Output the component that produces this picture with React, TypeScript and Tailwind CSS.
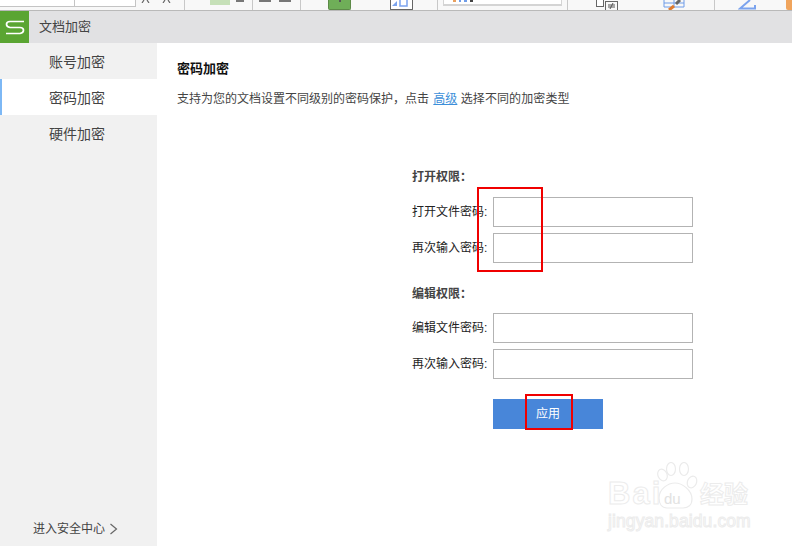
const F = "font-['Liberation_Sans','Noto_Sans_CJK_SC',sans-serif]";

function Glyph({ w }: { w: string }) {
  return <div className={`${w} h-[2px] shrink-0 bg-[#777]`} />;
}

function Legs() {
  return (
    <svg className="shrink-0" width="9" height="3" viewBox="0 0 9 3" fill="none" stroke="#666" strokeWidth="1.2">
      <path d="M3 0L1 3M6 0L8 3" />
    </svg>
  );
}

function Toolbar() {
  const section = "flex h-full shrink-0 items-start border-r border-[#c8c8c8]";
  return (
    <div className="flex h-[11px] shrink-0 overflow-hidden border-b border-[#b9b9b9] bg-[#f8f8f8]">
      <div className={`${section} w-[185px]`}>
        <div className="h-[7px] w-[75px] shrink-0 border-r border-b border-[#c4c4c4] bg-white" />
        <div className="h-[7px] w-[61px] shrink-0 border-r border-b border-[#c4c4c4] bg-white" />
        <div className="ml-[5px] flex gap-[12px]">
          <Legs />
          <Legs />
        </div>
      </div>
      <div className={`${section} w-[68px] pl-[25px]`}>
        <div className="h-[5px] w-[20px] bg-[#c6e0b8]" />
        <div className="ml-[6px]"><Glyph w="w-[8px]" /></div>
      </div>
      <div className={`${section} w-[48px] gap-[8px] pl-[6px]`}>
        <Glyph w="w-[12px]" />
        <Glyph w="w-[12px]" />
      </div>
      <div className={`${section} w-[137px] pl-[27px]`}>
        <div className="flex h-[10px] w-[23px] justify-center rounded-b-[2px] border border-t-0 border-[#5d8a48] bg-[#6fae58]">
          <div className="h-[2px] w-[2px] bg-[#555]" />
        </div>
        <div className="ml-[39px] h-[10px] w-[23px] rounded-b-[1px] border border-t-0 border-[#666] bg-white">
          <svg width="21" height="9" viewBox="0 0 21 9" fill="none">
            <path d="M1 6L6 1V6Z" fill="#7ba3ee" />
            <path d="M9 0V6H16V0" stroke="#7ba3ee" strokeWidth="1.5" />
          </svg>
        </div>
      </div>
      <div className={`${section} w-[130px] pl-[5px]`}>
        <div className="flex h-[6px] w-[119px] gap-[3px] border-x border-b-2 border-[#d4d4d4] bg-white pl-[9px]">
          <div className="h-[2px] w-[3px] bg-[#e8a060]" />
          <div className="h-[2px] w-[2px] bg-[#6f9ce8]" />
          <div className="h-[2px] w-[3px] bg-[#6f9ce8]" />
          <div className="h-[2px] w-[3px] bg-[#444]" />
        </div>
      </div>
      <div className={`${section} w-[147px] pl-[28px]`}>
        <div className="h-[7px] w-[8px] shrink-0 border border-t-0 border-[#666] bg-white" />
        <div className="ml-px mt-px flex h-[10px] w-[13px] shrink-0 items-center justify-center border border-[#666] bg-[#f8f8f8]">
          <svg width="9" height="6" viewBox="0 0 9 6" fill="none" stroke="#555" strokeWidth="1">
            <path d="M1 2h7M1 4h7M6 0L3 6" />
          </svg>
        </div>
        <svg className="ml-[45px] shrink-0" width="23" height="10" viewBox="0 0 23 10" fill="none">
          <path d="M1 0v7h20V0" stroke="#6f9ce8" />
          <path d="M1 3h20M11 0v7" stroke="#6f9ce8" />
          <path d="M6 10L11 6" stroke="#e07b2e" strokeWidth="3" />
          <path d="M13 4l4-4" stroke="#666" strokeWidth="3" />
        </svg>
      </div>
      <div className="flex h-full flex-1 items-start pl-[23px]">
        <svg className="shrink-0" width="19" height="10" viewBox="0 0 19 10" fill="none" stroke="#7ba3ee" strokeWidth="2">
          <path d="M12 0L2 8.5h16" />
          <path d="M17 5v4" />
        </svg>
        <div className="ml-auto h-[10px] w-[6px] rounded-bl-[2px] bg-[#f0a45c]" />
      </div>
    </div>
  );
}

function Row({ label }: { label: string }) {
  return (
    <div className="flex items-center">
      <span className="w-[81px] whitespace-nowrap text-[12px] leading-[30px] text-[#222]">{label}:</span>
      <div className="h-[30px] w-[200px] border border-[#b3b3b3] bg-white" />
    </div>
  );
}

function Watermark() {
  const outlined = "text-white [-webkit-text-stroke:1px_#ececec]";
  return (
    <div className="pointer-events-none absolute left-[608px] top-[462px] h-[68px] w-[142px]">
      <svg className="absolute left-[49px] top-0" width="42" height="48" viewBox="0 0 42 48" fill="white" stroke="#ebebeb" strokeWidth="1.2">
        <ellipse cx="5.5" cy="13" rx="4.5" ry="6" transform="rotate(-25 5.5 13)" />
        <ellipse cx="14" cy="7" rx="4.5" ry="6.5" />
        <ellipse cx="27" cy="7" rx="4.5" ry="6.5" />
        <ellipse cx="35" cy="20" rx="4.5" ry="6" transform="rotate(25 35 20)" />
        <path d="M2 36C2 27 11 21 18 21S35 28 35 37C35 43 31 46 26 46H10C5 46 2 42 2 36Z" />
      </svg>
      <span className="absolute left-[56px] top-[29px] text-[15px] leading-[16px] text-[#e2e2e2]">du</span>
      <span className={`absolute left-0 top-[17px] text-[31px] font-bold leading-[30px] tracking-[2px] ${outlined}`}>Bai</span>
      <span className={`absolute left-[92px] top-[20px] text-[24px] font-bold leading-[26px] ${outlined}`}>经验</span>
      <span className={`absolute left-0 top-[50px] whitespace-nowrap text-[17.5px] leading-[18px] tracking-[0.1px] ${outlined}`}>jingyan.baidu.com</span>
    </div>
  );
}

function SideItem({ label, active }: { label: string; active?: boolean }) {
  return (
    <div className={`flex h-[36px] items-center pt-[2px] ${active ? "border-l-2 border-[#7db8f5] bg-white pl-[47px]" : "pl-[49px]"}`}>
      {label}
    </div>
  );
}

export default function App() {
  return (
    <div className={`${F} relative flex h-[546px] w-[792px] flex-col overflow-hidden bg-white`}>
      <Toolbar />
      <div className="flex h-[32px] shrink-0 items-center bg-[#e1e1e3]">
        <div className="flex h-[32px] w-[29px] items-center justify-center bg-[#5aa532]">
          <svg width="20" height="15" viewBox="0 0 20 15" fill="none" stroke="white" strokeWidth="1.7">
            <path d="M19 1.5H5Q1.5 1.5 1.5 4.25T5 7.5H15Q18.5 7.5 18.5 10.25T15 13.5H1" />
          </svg>
        </div>
        <span className="ml-[10px] text-[13px] text-[#444]">文档加密</span>
      </div>
      <div className="flex min-h-0 flex-1">
        <aside className="flex w-[157px] shrink-0 flex-col bg-[#f1f1f1] text-[14px] text-[#444]">
          <SideItem label="账号加密" />
          <SideItem label="密码加密" active />
          <SideItem label="硬件加密" />
          <div className="mt-auto mb-[9px] flex items-center pl-[33px] text-[12px] leading-[16px] text-[#444]">
            进入安全中心
            <svg className="ml-[4px]" width="9" height="12" viewBox="0 0 9 12" fill="none" stroke="#666" strokeWidth="1.2">
              <path d="M1.5 1L7.5 6L1.5 11" />
            </svg>
          </div>
        </aside>
        <main className="flex-1 bg-white pl-[20px]">
          <h1 className="mt-[16px] text-[13px] font-bold leading-[20px] text-[#111]">密码加密</h1>
          <p className="mt-[10px] text-[12px] leading-[20px] text-[#444]">
            支持为您的文档设置不同级别的密码保护，点击 <span className="ml-px text-[#3d8fd9] underline">高级</span> <span className="tracking-[0.1px]">选择不同的加密类型</span>
          </p>
          <div className="ml-[235px] mt-[60px] flex w-[281px] flex-col">
            <div className="mb-[12px] text-[12px] font-bold leading-[16px] text-[#444]">打开权限：</div>
            <div className="flex flex-col gap-[6px]">
              <Row label="打开文件密码" />
              <Row label="再次输入密码" />
            </div>
            <div className="mb-[11px] mt-[23px] text-[12px] font-bold leading-[16px] text-[#444]">编辑权限：</div>
            <div className="flex flex-col gap-[6px]">
              <Row label="编辑文件密码" />
              <Row label="再次输入密码" />
            </div>
            <button className="ml-[81px] mt-[20px] block h-[30px] w-[110px] bg-[#4886d9] text-[12px] text-white">应用</button>
          </div>
        </main>
      </div>
      <div className="absolute left-[477px] top-[187px] h-[85px] w-[66px] border-2 border-[#f00000]" />
      <div className="absolute left-[525px] top-[394px] h-[36px] w-[48px] border-2 border-[#f00000]" />
      <Watermark />
    </div>
  );
}
